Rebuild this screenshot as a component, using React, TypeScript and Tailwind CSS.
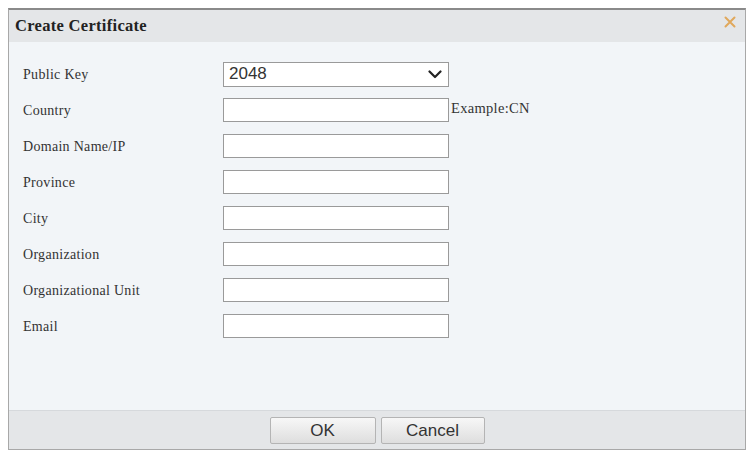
import React from "react";

const fields = [
  "Country",
  "Domain Name/IP",
  "Province",
  "City",
  "Organization",
  "Organizational Unit",
  "Email",
];

const serif = "font-['Liberation_Serif','Times_New_Roman',serif]";
const sans = "font-['Liberation_Sans',Arial,sans-serif]";

function Row({ label, children }: { label: string; children: React.ReactNode }) {
  return (
    <div className="flex h-9 items-center">
      <div className={`w-[200px] text-[14px] tracking-[0.3px] text-[#333] ${serif}`}>{label}</div>
      {children}
    </div>
  );
}

export default function App() {
  return (
    <div className="h-[451px] w-[753px] overflow-hidden bg-white pl-2 pt-2">
      <div className="flex h-[442px] w-[738px] flex-col border-x border-b border-t-2 border-x-[#a8a8a8] border-b-[#a8a8a8] border-t-[#8a8a8a] bg-[#f2f5f8]">
        {/* title bar */}
        <div className="flex h-[32px] items-center justify-between bg-[#e4e6e8] pl-[6px] pr-[9px]">
          <span className={`text-[16.5px] font-bold tracking-[0.3px] text-[#222] ${serif}`}>Create Certificate</span>
          <svg width="12" height="12" viewBox="0 0 12 12" className="mt-[-8px]">
            <path d="M1.5 1.5 L10.5 10.5 M10.5 1.5 L1.5 10.5" stroke="#e0a85c" strokeWidth="2" strokeLinecap="round" />
          </svg>
        </div>

        {/* form */}
        <div className="flex-1 pl-[14px] pt-[14px]">
          <Row label="Public Key">
            <div className="flex h-[25px] w-[226px] items-center justify-between border border-[#9a9a9a] bg-white pl-[5px] pr-[6px]">
              <span className={`text-[17px] text-[#333] ${sans}`}>2048</span>
              <svg width="14" height="9" viewBox="0 0 14 9">
                <path d="M1.5 1.5 L7 7 L12.5 1.5" fill="none" stroke="#222" strokeWidth="2.2" strokeLinecap="round" strokeLinejoin="round" />
              </svg>
            </div>
          </Row>
          {fields.map((f) => (
            <Row key={f} label={f}>
              <div className="h-[24px] w-[226px] border border-[#9a9a9a] bg-white" />
              {f === "Country" && (
                <span className={`ml-[2px] -mt-[3px] text-[14.5px] tracking-[0.3px] text-[#333] ${serif}`}>Example:CN</span>
              )}
            </Row>
          ))}
        </div>

        {/* footer */}
        <div className="flex h-[39px] items-start justify-center gap-[5px] border-t border-[#d6d9dc] bg-[#e4e6e8] pt-[6px]">
          <button className={`h-[27px] w-[106px] rounded-[2px] border border-[#b4b4b4] bg-gradient-to-b from-[#f7f7f7] to-[#dedede] text-[17px] text-[#333] ${sans}`}>
            OK
          </button>
          <button className={`h-[27px] w-[104px] rounded-[2px] border border-[#b4b4b4] bg-gradient-to-b from-[#f7f7f7] to-[#dedede] text-[17px] text-[#333] ${sans}`}>
            Cancel
          </button>
        </div>
      </div>
    </div>
  );
}
